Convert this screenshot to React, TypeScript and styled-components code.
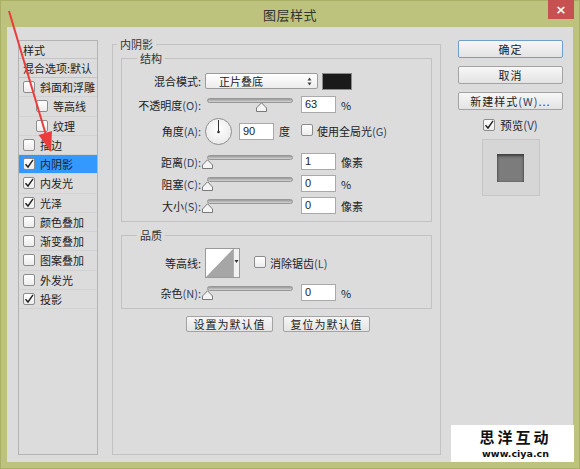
import React from "react";
import styled, { createGlobalStyle } from "styled-components";

const GlobalStyle = createGlobalStyle`
  html, body {
    margin: 0;
    padding: 0;
  }
  body {
    width: 580px;
    height: 469px;
    overflow: hidden;
    font-family: "Noto Sans CJK SC", "Noto Sans", sans-serif;
    font-size: 11px;
    color: #222;
  }
`;

const Window = styled.div`
  position: relative;
  width: 580px;
  height: 469px;
  box-sizing: border-box;
  background: #bdc37c;
  border: 1px solid #a9b066;
  display: flex;
  flex-direction: column;
`;

const TitleBar = styled.div`
  height: 26px;
  flex: none;
  display: grid;
  grid-template-columns: 1fr auto 1fr;
  align-items: center;
`;

const Title = styled.div`
  grid-column: 2;
  font-size: 13px;
  color: #333;
  letter-spacing: 0.5px;
`;

const CloseButton = styled.div`
  grid-column: 3;
  justify-self: end;
  align-self: start;
  margin-top: -1px;
  margin-right: 5px;
  width: 26px;
  height: 19px;
  background: #c75050;
  color: #fff;
  font-family: "DejaVu Sans", sans-serif;
  font-size: 13px;
  font-weight: bold;
  display: flex;
  align-items: center;
  justify-content: center;
`;

const Body = styled.div`
  flex: 1;
  margin: 0 6px 6px 6px;
  background: #dcdcdc;
  display: flex;
  align-items: stretch;
  padding: 13px 0 7px 11px;
  min-height: 0;
`;

/* ---------- left style list ---------- */

const StyleList = styled.div`
  width: 80px;
  flex: none;
  box-sizing: border-box;
  border: 1px solid #b3b3b3;
  background: #dcdcdc;
  overflow: hidden;
`;

const ListHeader = styled.div`
  height: 19px;
  box-sizing: border-box;
  border-bottom: 1px solid #c4c4c4;
  padding-left: 4px;
  display: flex;
  align-items: center;
  white-space: nowrap;
  &:first-child {
    height: 18px;
  }
`;

const ListRow = styled.div<{ $indent: number; $selected?: boolean }>`
  height: 19.25px;
  box-sizing: border-box;
  border-bottom: 1px solid #d2d2d2;
  padding-left: ${(p) => p.$indent}px;
  display: flex;
  align-items: center;
  gap: 5px;
  white-space: nowrap;
  background: ${(p) => (p.$selected ? "#3399ff" : "transparent")};
`;

const Box = styled.span`
  width: 12px;
  height: 12px;
  flex: none;
  box-sizing: border-box;
  border: 1px solid #8c8c8c;
  border-radius: 2px;
  background: linear-gradient(#ffffff, #ececec);
  display: inline-flex;
  align-items: center;
  justify-content: center;
`;

function Check({ checked }: { checked?: boolean }) {
  return (
    <Box>
      {checked && (
        <svg width="10" height="10" viewBox="0 0 10 10">
          <path d="M1.5 5.2 L4 8 L9 0.8" fill="none" stroke="#222" strokeWidth="1.4" />
        </svg>
      )}
    </Box>
  );
}

/* ---------- middle panel ---------- */

const Group = styled.fieldset`
  margin: -3px 0 0 14px;
  width: 329px;
  flex: none;
  box-sizing: border-box;
  padding: 0 8px;
  border: 1px solid #c2c2c2;
  min-inline-size: 0;
`;

const Legend = styled.legend<{ $offset: number }>`
  padding: 0 3px;
  margin-left: ${(p) => p.$offset}px;
  line-height: 14px;
  color: #333;
`;

const SubGroup = styled.fieldset<{ $mt: number }>`
  margin: ${(p) => p.$mt}px 0 0 0;
  padding: 0 0 7px 0;
  border: 1px solid #c2c2c2;
  min-inline-size: 0;
`;

const Row = styled.div<{ $h: number; $mt: number }>`
  height: ${(p) => p.$h}px;
  margin-top: ${(p) => p.$mt}px;
  display: flex;
  align-items: center;
  white-space: nowrap;
`;

const Label = styled.span`
  width: 79px;
  margin-right: 4px;
  text-align: right;
  flex: none;
`;

const Latin = styled.span`
  color: #33415e;
`;

const Select = styled.div`
  width: 113px;
  height: 16px;
  box-sizing: border-box;
  border: 1px solid #9c9c9c;
  border-radius: 2px;
  background: linear-gradient(#ffffff, #ededed);
  padding: 0 5px 0 13px;
  display: flex;
  align-items: center;
  justify-content: space-between;
`;

const Swatch = styled.div`
  width: 30px;
  height: 17px;
  margin-left: 4px;
  box-sizing: border-box;
  border: 1px solid #8a8a8a;
  background: #1a1a1a;
`;

const SliderBox = styled.div`
  position: relative;
  width: 90px;
  height: 17px;
  margin-right: 6px;
  flex: none;
`;

const Track = styled.div`
  position: absolute;
  left: 2px;
  right: 2px;
  top: 2px;
  height: 5px;
  box-sizing: border-box;
  border-radius: 3px;
  border: 1px solid #979797;
  background: linear-gradient(#9a9a9a, #d4d4d4);
`;

const Thumb = styled.svg`
  position: absolute;
  top: 6px;
`;

function Slider({ value }: { value: number }) {
  const left = 2 + (value / 100) * 86 - 5.5;
  return (
    <SliderBox>
      <Track />
      <Thumb width="11" height="10" viewBox="0 0 11 10" style={{ left }}>
        <path d="M0.5 9.5 V6 L5.5 0.8 L10.5 6 V9.5 Z" fill="#f4f4f4" stroke="#7a7a7a" />
      </Thumb>
    </SliderBox>
  );
}

const Field = styled.div`
  width: 35px;
  height: 17px;
  box-sizing: border-box;
  border: 1px solid #a9a9a9;
  background: #fff;
  padding-left: 3px;
  line-height: 15px;
  flex: none;
  font-family: "Liberation Sans", sans-serif;
`;

const Unit = styled.span<{ $ml?: number }>`
  margin-left: ${(p) => p.$ml ?? 5}px;
`;

const Dial = styled.div`
  width: 27px;
  height: 27px;
  margin-right: 7px;
  flex: none;
  box-sizing: border-box;
  border-radius: 50%;
  border: 1px solid #8e8e8e;
  background: radial-gradient(circle at 50% 40%, #ffffff, #e4e4e4);
`;

const ContourBox = styled.div`
  width: 35px;
  height: 30px;
  flex: none;
  box-sizing: border-box;
  border: 1px solid #9a9a9a;
  background: #fff;
`;

const ButtonsRow = styled.div`
  display: flex;
  justify-content: center;
  gap: 10px;
  margin-top: 7px;
  padding-left: 3px;
`;

const SmallButton = styled.div`
  width: 87px;
  height: 16px;
  box-sizing: border-box;
  border: 1px solid #a3a3a3;
  border-radius: 2px;
  background: linear-gradient(#f6f6f6, #e4e4e4);
  display: flex;
  align-items: center;
  justify-content: center;
  letter-spacing: 1px;
`;

/* ---------- right column ---------- */

const Side = styled.div`
  margin-left: 17px;
  width: 105px;
  flex: none;
  display: flex;
  flex-direction: column;
  align-items: center;
`;

const SideButton = styled.div<{ $primary?: boolean; $mt: number }>`
  width: 105px;
  height: 18px;
  margin-top: ${(p) => p.$mt}px;
  box-sizing: border-box;
  border: 1px solid ${(p) => (p.$primary ? "#6f9fd0" : "#a3a3a3")};
  border-radius: 2px;
  background: linear-gradient(#f7f7f7, #e3e3e3);
  display: flex;
  align-items: center;
  justify-content: center;
  letter-spacing: 1px;
`;

const PreviewToggle = styled.div`
  margin-top: 9px;
  height: 12px;
  display: flex;
  align-items: center;
  gap: 5px;
  font-size: 11.5px;
`;

const PreviewBox = styled.div`
  margin-top: 8px;
  width: 58px;
  height: 57px;
  box-sizing: border-box;
  border: 1px solid #c6c6c6;
  background: #d6d6d6;
  display: flex;
  align-items: center;
  justify-content: center;
`;

const PreviewSquare = styled.div`
  width: 27px;
  height: 28px;
  background: #7c7c7c;
  box-shadow: inset 0 2px 3px #3c3c3c, inset 0 0 2px #505050;
`;

/* ---------- overlays ---------- */

const Arrow = styled.svg`
  position: absolute;
  left: 0;
  top: 0;
  pointer-events: none;
`;

const Watermark = styled.div`
  position: absolute;
  right: 5px;
  bottom: 6px;
  width: 123px;
  height: 37px;
  background: #fff;
  display: flex;
  flex-direction: column;
  align-items: center;
  justify-content: center;
  gap: 2px;
  padding-left: 6px;
  box-sizing: border-box;
`;

const MarkTitle = styled.div`
  font-size: 15px;
  font-weight: bold;
  line-height: 18px;
  letter-spacing: 3px;
  color: #111;
`;

const MarkUrl = styled.div`
  font-family: "DejaVu Sans", sans-serif;
  font-size: 9.5px;
  font-weight: bold;
  line-height: 11px;
  color: #111;
`;

const items = [
  { name: "斜面和浮雕", indent: 4, checked: false },
  { name: "等高线", indent: 17, checked: false },
  { name: "纹理", indent: 17, checked: false },
  { name: "描边", indent: 4, checked: false },
  { name: "内阴影", indent: 4, checked: true, selected: true },
  { name: "内发光", indent: 4, checked: true },
  { name: "光泽", indent: 4, checked: true },
  { name: "颜色叠加", indent: 4, checked: false },
  { name: "渐变叠加", indent: 4, checked: false },
  { name: "图案叠加", indent: 4, checked: false },
  { name: "外发光", indent: 4, checked: false },
  { name: "投影", indent: 4, checked: true },
];

export default function App() {
  return (
    <>
      <GlobalStyle />
      <Window>
        <TitleBar>
          <Title>图层样式</Title>
          <CloseButton>×</CloseButton>
        </TitleBar>
        <Body>
          <StyleList>
            <ListHeader>样式</ListHeader>
            <ListHeader>混合选项:默认</ListHeader>
            {items.map((it) => (
              <ListRow key={it.name} $indent={it.indent} $selected={it.selected}>
                <Check checked={it.checked} />
                <span>{it.name}</span>
              </ListRow>
            ))}
          </StyleList>

          <Group>
            <Legend $offset={-4}>内阴影</Legend>
            <SubGroup $mt={0}>
              <Legend $offset={15}>结构</Legend>
              <Row $h={18} $mt={7}>
                <Label>混合模式:</Label>
                <Select>
                  <span>正片叠底</span>
                  <svg width="5" height="9" viewBox="0 0 5 9">
                    <path d="M2.5 0.5 L4.5 3.5 H0.5 Z M2.5 8.5 L4.5 5.5 H0.5 Z" fill="#444" />
                  </svg>
                </Select>
                <Swatch />
              </Row>
              <Row $h={17} $mt={6}>
                <Label>
                  不透明度<Latin>(O):</Latin>
                </Label>
                <Slider value={63} />
                <Field>63</Field>
                <Unit>%</Unit>
              </Row>
              <Row $h={28} $mt={4}>
                <Label>
                  角度<Latin>(A):</Latin>
                </Label>
                <Dial>
                  <svg width="25" height="25" viewBox="0 0 25 25">
                    <line x1="12.5" y1="12.5" x2="12.5" y2="1" stroke="#333" strokeWidth="1" />
                    <circle cx="12.5" cy="13" r="1.3" fill="#333" />
                  </svg>
                </Dial>
                <Field>90</Field>
                <Unit>度</Unit>
                <Unit $ml={11}>
                  <Check />
                </Unit>
                <Unit $ml={4}>
                  使用全局光<Latin>(G)</Latin>
                </Unit>
              </Row>
              <Row $h={17} $mt={8}>
                <Label>
                  距离<Latin>(D):</Latin>
                </Label>
                <Slider value={0} />
                <Field>1</Field>
                <Unit>像素</Unit>
              </Row>
              <Row $h={17} $mt={5}>
                <Label>
                  阻塞<Latin>(C):</Latin>
                </Label>
                <Slider value={0} />
                <Field>0</Field>
                <Unit>%</Unit>
              </Row>
              <Row $h={17} $mt={5}>
                <Label>
                  大小<Latin>(S):</Latin>
                </Label>
                <Slider value={0} />
                <Field>0</Field>
                <Unit>像素</Unit>
              </Row>
            </SubGroup>

            <SubGroup $mt={6}>
              <Legend $offset={15}>品质</Legend>
              <Row $h={30} $mt={6}>
                <Label>等高线:</Label>
                <ContourBox>
                  <svg width="33" height="28" viewBox="0 0 33 28">
                    <polygon points="0,28 27,0 27,28" fill="#a6a6a6" />
                    <line x1="27.5" y1="0" x2="27.5" y2="28" stroke="#b0b0b0" />
                    <rect x="28" y="0" width="5" height="28" fill="#f2f2f2" />
                    <path d="M28.5 11 H32.5 L30.5 14 Z" fill="#333" />
                  </svg>
                </ContourBox>
                <Unit $ml={14}>
                  <Check />
                </Unit>
                <Unit $ml={4}>
                  消除锯齿<Latin>(L)</Latin>
                </Unit>
              </Row>
              <Row $h={17} $mt={6}>
                <Label>
                  杂色<Latin>(N):</Latin>
                </Label>
                <Slider value={0} />
                <Field>0</Field>
                <Unit>%</Unit>
              </Row>
            </SubGroup>

            <ButtonsRow>
              <SmallButton>设置为默认值</SmallButton>
              <SmallButton>复位为默认值</SmallButton>
            </ButtonsRow>
          </Group>

          <Side>
            <SideButton $primary $mt={0}>
              确定
            </SideButton>
            <SideButton $mt={8}>取消</SideButton>
            <SideButton $mt={8}>
              新建样式<Latin>(W)...</Latin>
            </SideButton>
            <PreviewToggle>
              <Check checked />
              <span>
                预览<Latin>(V)</Latin>
              </span>
            </PreviewToggle>
            <PreviewBox>
              <PreviewSquare />
            </PreviewBox>
          </Side>
        </Body>

        <Arrow width="80" height="170" viewBox="0 0 80 170">
          <line x1="8" y1="10" x2="45" y2="134" stroke="#ec3b3b" strokeWidth="2" />
          <polygon points="50,151 37.6,134 51,130" fill="#ec3b3b" />
        </Arrow>

        <Watermark>
          <MarkTitle>思洋互动</MarkTitle>
          <MarkUrl>www.ciya.cn</MarkUrl>
        </Watermark>
      </Window>
    </>
  );
}
